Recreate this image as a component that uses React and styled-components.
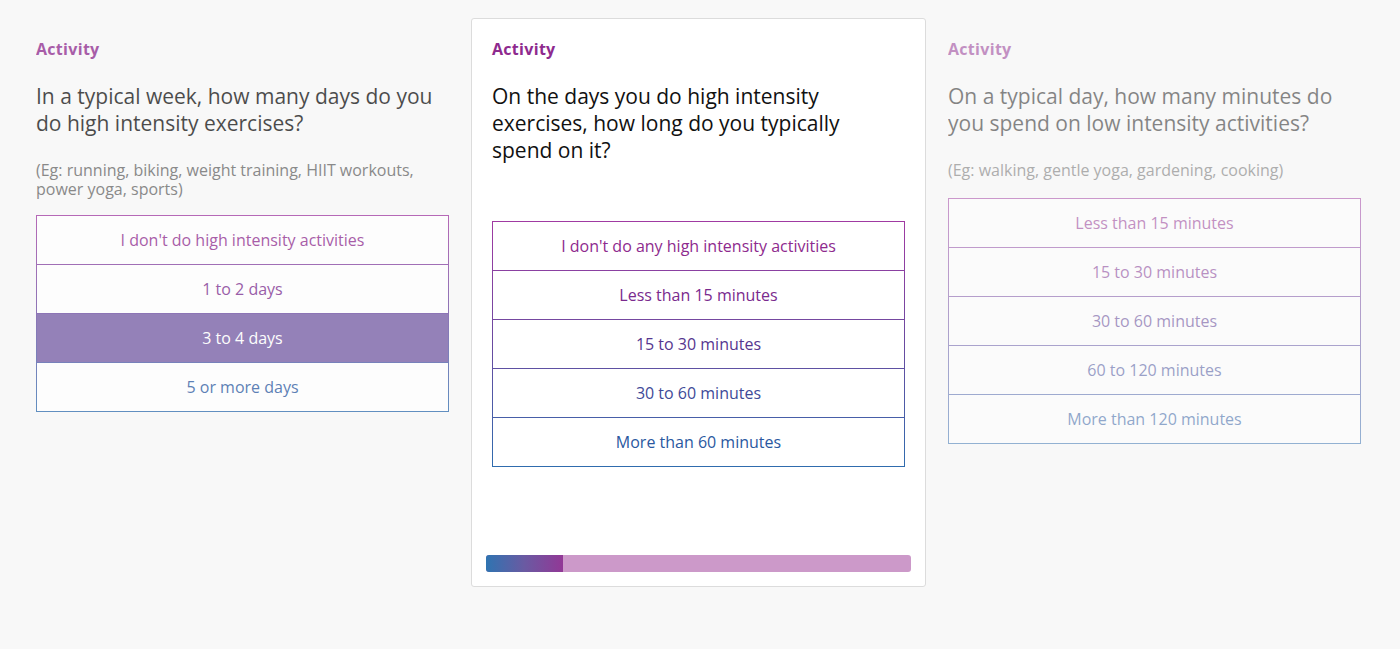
import styled, { createGlobalStyle } from 'styled-components';

const GlobalStyle = createGlobalStyle`
  html, body {
    margin: 0;
    background: #f8f8f8;
    font-family: "Open Sans", Lato, sans-serif;
  }
`;

const Page = styled.div`
  display: flex;
  align-items: flex-start;
  gap: 1px;
  padding: 18px 0 0 15px;
  height: 649px;
  box-sizing: border-box;
`;

const Card = styled.div`
  width: 455px;
  height: 569px;
  box-sizing: border-box;
  display: flex;
  flex-direction: column;
  padding: 20px 20px 14px;
  border: 1px solid ${p => (p.active ? '#dcdcdc' : 'transparent')};
  border-radius: 3px;
  background: ${p => (p.active ? '#fff' : 'transparent')};
  opacity: ${p => p.fade};
`;

const Label = styled.div`
  font-size: 16px;
  font-weight: 700;
  color: #8e2a8e;
  line-height: 20px;
  letter-spacing: 0.3px;
`;

const Question = styled.div`
  margin-top: 24px;
  font-size: 21px;
  line-height: 27px;
  color: #111;
`;

const Hint = styled.div`
  margin-top: 24px;
  font-size: 16px;
  line-height: 19px;
  color: #656565;
`;

const Options = styled.div`
  margin-top: ${p => p.offset}px;
  display: flex;
  flex-direction: column;
  gap: 1px;
  padding: 1px;
  background: linear-gradient(180deg, #a03aa2 0%, #6a4aa0 50%, #2f6cae 100%);
`;

const Option = styled.div`
  height: 48px;
  display: flex;
  align-items: center;
  justify-content: center;
  font-size: 16px;
  color: ${p => (p.selected ? '#fff' : p.color)};
  background: ${p => (p.selected ? '#735aa3' : '#fff')};
`;

const Progress = styled.div`
  margin: auto -6px 0;
  height: 17px;
  border-radius: 3px;
  background: #cc99c9;
  overflow: hidden;
  display: flex;
`;

const Fill = styled.div`
  height: 100%;
  background: linear-gradient(90deg, #2f74b1 0%, #6a5aa2 50%, #923896 100%);
`;

const textColors = ['#8e2a8e', '#7a2a8e', '#56368f', '#3e4a98', '#2a58a0'];

function pickColor(i, n) {
  const idx = Math.round((i / Math.max(n - 1, 1)) * (textColors.length - 1));
  return textColors[idx];
}

const cards = [
  {
    fade: 0.75,
    question: 'In a typical week, how many days do you do high intensity exercises?',
    hint: '(Eg: running, biking, weight training, HIIT workouts, power yoga, sports)',
    offset: 16,
    options: ["I don't do high intensity activities", '1 to 2 days', '3 to 4 days', '5 or more days'],
    selected: 2,
  },
  {
    fade: 1,
    active: true,
    question: 'On the days you do high intensity exercises, how long do you typically spend on it?',
    offset: 57,
    options: [
      "I don't do any high intensity activities",
      'Less than 15 minutes',
      '15 to 30 minutes',
      '30 to 60 minutes',
      'More than 60 minutes',
    ],
    progress: 18,
  },
  {
    fade: 0.5,
    question: 'On a typical day, how many minutes do you spend on low intensity activities?',
    hint: '(Eg: walking, gentle yoga, gardening, cooking)',
    offset: 18,
    options: ['Less than 15 minutes', '15 to 30 minutes', '30 to 60 minutes', '60 to 120 minutes', 'More than 120 minutes'],
  },
];

export default function App() {
  return (
    <>
      <GlobalStyle />
      <Page>
        {cards.map((c, ci) => (
          <Card key={ci} active={c.active} fade={c.fade}>
            <Label>Activity</Label>
            <Question>{c.question}</Question>
            {c.hint && <Hint>{c.hint}</Hint>}
            <Options offset={c.offset}>
              {c.options.map((o, i) => (
                <Option key={o} selected={c.selected === i} color={pickColor(i, c.options.length)}>
                  {o}
                </Option>
              ))}
            </Options>
            {c.progress !== undefined && (
              <Progress>
                <Fill style={{ width: `${c.progress}%` }} />
              </Progress>
            )}
          </Card>
        ))}
      </Page>
    </>
  );
}
